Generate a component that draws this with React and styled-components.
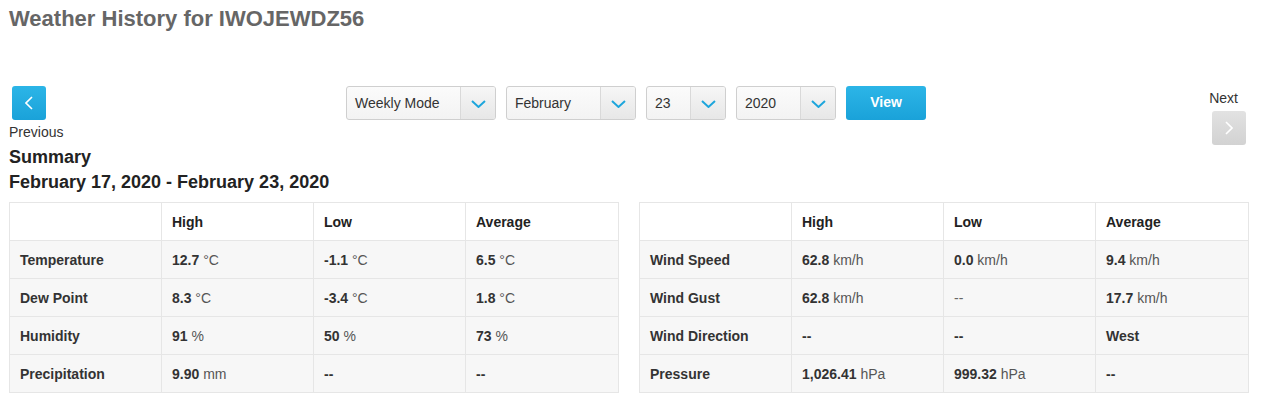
import React from 'react';
import styled, { createGlobalStyle } from 'styled-components';

const GlobalStyle = createGlobalStyle`
  body {
    margin: 0;
    background: #fff;
    font-family: 'Liberation Sans', Arial, sans-serif;
    color: #333;
  }
`;

const Page = styled.div`
  width: 1240px;
  padding: 6px 0 0 9px;
`;

const Title = styled.h1`
  margin: 0;
  font-size: 22px;
  line-height: 26px;
  font-weight: 700;
  color: #666;
`;

const Toolbar = styled.div`
  display: flex;
  align-items: flex-start;
  height: 60px;
  margin-top: 54px;
`;

const NavCol = styled.div`
  display: flex;
  flex-direction: column;
  align-items: ${(p) => (p.$right ? 'flex-end' : 'flex-start')};
  width: ${(p) => (p.$right ? '37px' : '54px')};
  margin-top: ${(p) => (p.$right ? '4px' : '0')};
  margin-right: ${(p) => (p.$right ? '3px' : '0')};
`;

const NavLabel = styled.span`
  font-size: 14px;
  line-height: 16px;
  color: #333;
  margin: ${(p) => (p.$right ? '0 8px 5px 0' : '4px 0 0 0')};
`;

const NavButton = styled.button`
  width: 34px;
  height: 34px;
  padding: 0;
  margin-left: ${(p) => (p.$disabled ? '0' : '3px')};
  border: none;
  border-radius: 3px;
  display: flex;
  align-items: center;
  justify-content: center;
  background: ${(p) =>
    p.$disabled
      ? 'linear-gradient(#e2e2e2, #d2d2d2)'
      : 'linear-gradient(#2cb5e7, #1aa2d9)'};
  cursor: pointer;
`;

const Controls = styled.div`
  flex: 1;
  display: flex;
  justify-content: center;
  gap: 10px;
`;

const Select = styled.div`
  box-sizing: border-box;
  width: ${(p) => p.$w}px;
  height: 34px;
  display: flex;
  border: 1px solid #cfcfcf;
  border-radius: 3px;
  background: linear-gradient(#fbfbfb, #f3f3f3);
  overflow: hidden;
`;

const SelectValue = styled.span`
  flex: 1;
  padding-left: 8px;
  font-size: 14px;
  line-height: 32px;
  color: #333;
`;

const SelectArrow = styled.span`
  width: 35px;
  border-left: 1px solid #d9d9d9;
  background: linear-gradient(#f6f6f6, #e7e7e7);
  display: flex;
  align-items: center;
  justify-content: center;
  padding-top: 2px;
  box-sizing: border-box;
`;

const ViewButton = styled.button`
  width: 80px;
  height: 34px;
  border: none;
  border-radius: 3px;
  background: linear-gradient(#2cb5e7, #1aa2d9);
  color: #fff;
  font-family: inherit;
  font-size: 14px;
  font-weight: 700;
  padding: 0 0 2px;
  cursor: pointer;
`;

const Heading = styled.h2`
  margin: ${(p) => p.$mt || 0}px 0 0;
  font-size: 18px;
  line-height: 22px;
  font-weight: 700;
  color: #222;
`;

const Tables = styled.div`
  display: grid;
  grid-template-columns: 1fr 1fr;
  gap: 20px;
  margin-top: 9px;
`;

const Table = styled.table`
  width: 100%;
  table-layout: fixed;
  border-collapse: collapse;
  font-size: 14px;
`;

const Th = styled.th`
  height: 38px;
  padding: 0 10px;
  text-align: left;
  font-weight: 700;
  color: #222;
  background: #fff;
  border: 1px solid #e6e6e6;
  box-sizing: border-box;
`;

const Td = styled.td`
  height: 38px;
  padding: 0 10px;
  background: #f7f7f7;
  border: 1px solid #e6e6e6;
  font-weight: ${(p) => (p.$label ? 700 : 400)};
  color: #333;
  box-sizing: border-box;
`;

const Num = styled.b`
  font-weight: 700;
  color: #333;
`;

const Unit = styled.span`
  color: #555;
  font-weight: 400;
`;

const Empty = styled.span`
  color: #666;
  font-weight: 400;
`;

const Chevron = ({ dir, color, w = 8, h = 14, sw = 1.6 }) => {
  const pts =
    dir === 'left'
      ? `${w - 1},1 1,${h / 2} ${w - 1},${h - 1}`
      : dir === 'right'
      ? `1,1 ${w - 1},${h / 2} 1,${h - 1}`
      : `1,1 ${w / 2},${h - 1} ${w - 1},1`;
  return (
    <svg width={w} height={h} viewBox={`0 0 ${w} ${h}`}>
      <polyline points={pts} fill="none" stroke={color} strokeWidth={sw} />
    </svg>
  );
};

const Value = ({ v }) => {
  if (v === null) return <Empty>--</Empty>;
  if (typeof v === 'string') return <Num>{v}</Num>;
  return (
    <>
      <Num>{v[0]}</Num> <Unit>{v[1]}</Unit>
    </>
  );
};

const leftRows = [
  ['Temperature', ['12.7', '°C'], ['-1.1', '°C'], ['6.5', '°C']],
  ['Dew Point', ['8.3', '°C'], ['-3.4', '°C'], ['1.8', '°C']],
  ['Humidity', ['91', '%'], ['50', '%'], ['73', '%']],
  ['Precipitation', ['9.90', 'mm'], '--', '--'],
];

const rightRows = [
  ['Wind Speed', ['62.8', 'km/h'], ['0.0', 'km/h'], ['9.4', 'km/h']],
  ['Wind Gust', ['62.8', 'km/h'], null, ['17.7', 'km/h']],
  ['Wind Direction', '--', '--', 'West'],
  ['Pressure', ['1,026.41', 'hPa'], ['999.32', 'hPa'], '--'],
];

const SummaryTable = ({ rows }) => (
  <Table>
    <colgroup>
      <col style={{ width: '152px' }} />
      <col style={{ width: '152px' }} />
      <col style={{ width: '152px' }} />
      <col />
    </colgroup>
    <thead>
      <tr>
        <Th />
        <Th>High</Th>
        <Th>Low</Th>
        <Th>Average</Th>
      </tr>
    </thead>
    <tbody>
      {rows.map((r) => (
        <tr key={r[0]}>
          <Td $label>{r[0]}</Td>
          {r.slice(1).map((v, i) => (
            <Td key={i}>
              <Value v={v} />
            </Td>
          ))}
        </tr>
      ))}
    </tbody>
  </Table>
);

const selects = [
  ['Weekly Mode', 150],
  ['February', 130],
  ['23', 80],
  ['2020', 100],
];

export default function App() {
  return (
    <>
      <GlobalStyle />
      <Page>
        <Title>Weather History for IWOJEWDZ56</Title>
        <Toolbar>
          <NavCol>
            <NavButton>
              <Chevron dir="left" color="#fff" />
            </NavButton>
            <NavLabel>Previous</NavLabel>
          </NavCol>
          <Controls>
            {selects.map(([label, w]) => (
              <Select key={label} $w={w}>
                <SelectValue>{label}</SelectValue>
                <SelectArrow>
                  <Chevron dir="down" color="#1ea6dc" w={15} h={8} sw={2} />
                </SelectArrow>
              </Select>
            ))}
            <ViewButton>View</ViewButton>
          </Controls>
          <NavCol $right>
            <NavLabel $right>Next</NavLabel>
            <NavButton $disabled>
              <Chevron dir="right" color="#fff" />
            </NavButton>
          </NavCol>
        </Toolbar>
        <Heading>Summary</Heading>
        <Heading $mt={3}>February 17, 2020 - February 23, 2020</Heading>
        <Tables>
          <SummaryTable rows={leftRows} />
          <SummaryTable rows={rightRows} />
        </Tables>
      </Page>
    </>
  );
}
